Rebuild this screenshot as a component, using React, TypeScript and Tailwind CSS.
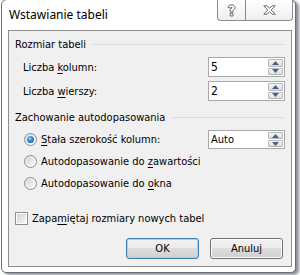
import React from "react";

function Arrow({ up }: { up?: boolean }) {
  return (
    <svg width="7" height="4" viewBox="0 0 7 4">
      {up ? (
        <path d="M0 4 L3.5 0 L7 4 Z" fill="#4d5f96" />
      ) : (
        <path d="M0 0 L3.5 4 L7 0 Z" fill="#4d5f96" />
      )}
    </svg>
  );
}

function SpinBtn({ up }: { up?: boolean }) {
  return (
    <div className="flex-1 flex items-center justify-center border border-[#b8b8b8] rounded-[1px] bg-gradient-to-b from-[#f6f6f6] to-[#dcdcdc]">
      <Arrow up={up} />
    </div>
  );
}

function SpinBox({ value, h }: { value: string; h: string }) {
  return (
    <div className={`ml-auto mr-[6px] w-[77px] ${h} border border-[#a9a9a9] bg-white flex`}>
      <div className="flex-1 flex items-center pl-[2px] text-[12px] text-black">{value}</div>
      <div className="w-[16px] flex flex-col gap-[1px] py-[1px] pr-[1px]">
        <SpinBtn up />
        <SpinBtn />
      </div>
    </div>
  );
}

function Radio({ checked }: { checked?: boolean }) {
  return (
    <div className="w-[13px] h-[13px] rounded-full border border-[#8e8f8f] bg-gradient-to-br from-[#dcdcdc] to-[#ffffff] flex items-center justify-center shrink-0">
      {checked ? (
        <div className="w-[7px] h-[7px] rounded-full bg-[radial-gradient(circle_at_40%_35%,#8fd3ff_0%,#2a8ad6_45%,#0c4a8a_100%)]" />
      ) : (
        <div className="w-[7px] h-[7px] rounded-full bg-gradient-to-br from-[#d8d8d8] to-[#f4f4f4]" />
      )}
    </div>
  );
}

function Header({ text }: { text: string }) {
  return (
    <div className="flex items-center h-[13px] pl-[6px] pr-[6px]">
      <span>{text}</span>
      <div className="flex-1 h-px bg-[#d5dfe5] ml-[6px]" />
    </div>
  );
}

export default function App() {
  return (
    <div className="w-[300px] h-[275px] bg-white overflow-hidden font-['Tahoma','DejaVu_Sans_Condensed','Liberation_Sans',sans-serif] text-[11px] leading-[13px] text-black">
      <div className="ml-[1px] mt-[-1px] w-[295px] h-[274px] border border-[#6e6e6e] rounded-t-[6px] rounded-b-[5px] bg-white shadow-[3px_2px_3px_rgba(40,50,70,0.55)] flex flex-col">
        <div className="h-[30px] flex items-start">
          <div className="pl-[7px] pt-[7px] text-[12px] leading-[16px] font-['Noto_Sans','Open_Sans',sans-serif]">
            Wstawianie tabeli
          </div>
          <div className="ml-auto mr-[2px] flex h-[21px]">
            <div className="w-[29px] h-full border border-t-0 border-[#8a8a8a] rounded-bl-[4px] bg-gradient-to-b from-white to-[#efefef] flex items-center justify-center">
              <svg width="9" height="13" viewBox="0 0 9 13">
                <path
                  d="M1 3.5 C1 1.5 2.5 0.8 4.5 0.8 C6.6 0.8 8 1.9 8 3.6 C8 5.1 7 5.7 6 6.3 L6 8 L3.2 8 L3.2 5.8 C3.2 5 4 4.6 4.8 4.2 C5.3 3.9 5.3 3.2 4.6 3.2 C4 3.2 3.8 3.6 3.8 4.1 Z M3.2 9.3 L6 9.3 L6 12 L3.2 12 Z"
                  fill="#fff"
                  stroke="#5a5a5a"
                  strokeWidth="0.9"
                />
              </svg>
            </div>
            <div className="w-[47px] h-full border border-t-0 border-l-0 border-[#8a8a8a] rounded-br-[4px] bg-gradient-to-b from-white to-[#efefef] flex items-center justify-center">
              <svg width="13" height="10" viewBox="0 0 13 10">
                <path
                  d="M0.8 0.8 L4 0.8 L6.5 3.3 L9 0.8 L12.2 0.8 L8.2 5 L12.2 9.2 L9 9.2 L6.5 6.7 L4 9.2 L0.8 9.2 L4.8 5 Z"
                  fill="#fff"
                  stroke="#5a5a5a"
                  strokeWidth="0.9"
                />
              </svg>
            </div>
          </div>
        </div>
        <div className="ml-[6px] mr-[3px] w-[284px] h-[237px] border border-[#8f8f8f] bg-[#f0f0f0] flex flex-col">
          <div className="mt-[7px]">
            <Header text="Rozmiar tabeli" />
          </div>
          <div className="mt-[6px] h-[20px] flex items-center">
            <span className="pl-[14px]">
              Liczba <span className="underline underline-offset-[2px]">k</span>olumn:
            </span>
            <SpinBox value="5" h="h-[20px]" />
          </div>
          <div className="mt-[4px] h-[20px] flex items-center">
            <span className="pl-[14px]">
              Liczba <span className="underline underline-offset-[2px]">w</span>ierszy:
            </span>
            <SpinBox value="2" h="h-[20px]" />
          </div>
          <div className="mt-[10px]">
            <Header text="Zachowanie autodopasowania" />
          </div>
          <div className="mt-[6px] h-[19px] flex items-center pl-[15px]">
            <Radio checked />
            <span className="ml-[4px]">
              <span className="underline underline-offset-[2px]">S</span>tała szerokość kolumn:
            </span>
            <div className="ml-auto mr-[6px] w-[77px] h-[19px] border border-[#a9a9a9] bg-white flex">
              <div className="flex-1 flex items-center pl-[2px] text-[11px]">Auto</div>
              <div className="w-[16px] flex flex-col gap-[1px] py-[1px] pr-[1px]">
                <SpinBtn up />
                <SpinBtn />
              </div>
            </div>
          </div>
          <div className="mt-[3px] h-[19px] flex items-center pl-[15px]">
            <Radio />
            <span className="ml-[4px]">
              Autodopasowanie do <span className="underline underline-offset-[2px]">z</span>awartości
            </span>
          </div>
          <div className="mt-[3px] h-[19px] flex items-center pl-[15px]">
            <Radio />
            <span className="ml-[4px]">
              Autodopasowanie do <span className="underline underline-offset-[2px]">o</span>kna
            </span>
          </div>
          <div className="mt-[19px] h-[13px] flex items-center pl-[6px]">
            <div className="w-[13px] h-[13px] border border-[#8e8f8f] bg-white flex items-center justify-center shrink-0">
              <div className="w-[9px] h-[9px] bg-gradient-to-br from-[#d4d4d4] to-[#f6f6f6]" />
            </div>
            <span className="ml-[4px]">
              Zapa<span className="underline underline-offset-[2px]">m</span>iętaj rozmiary nowych tabel
            </span>
          </div>
          <div className="mt-[13px] flex justify-end gap-[11px] pr-[8px]">
            <div className="w-[73px] h-[21px] rounded-[3px] border border-[#3c7fb1] bg-[linear-gradient(#f2f2f2_0%,#ebebeb_45%,#dddddd_50%,#cfcfcf_100%)] shadow-[inset_0_0_0_1px_#97d6f5] flex items-center justify-center">
              OK
            </div>
            <div className="w-[73px] h-[21px] rounded-[3px] border border-[#707070] bg-[linear-gradient(#f2f2f2_0%,#ebebeb_45%,#dddddd_50%,#cfcfcf_100%)] shadow-[inset_0_0_0_1px_#fcfcfc] flex items-center justify-center">
              Anuluj
            </div>
          </div>
        </div>
      </div>
    </div>
  );
}
